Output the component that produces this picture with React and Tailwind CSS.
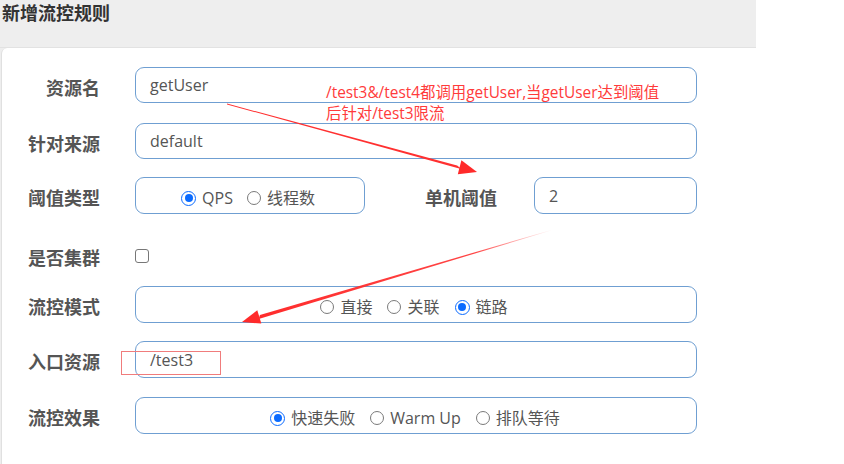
import React from "react";

const FONT = { fontFamily: '"Open Sans", "Noto Sans CJK SC", sans-serif' };

function Radio({ checked, label }) {
  return (
    <span className="flex items-center">
      {checked ? (
        <span className="flex h-[15px] w-[15px] items-center justify-center rounded-full border-[1.5px] border-[#0b6bff] bg-white">
          <span className="h-[8px] w-[8px] rounded-full bg-[#0b6bff]" />
        </span>
      ) : (
        <span className="h-[14px] w-[14px] rounded-full border border-[#7a7a7a] bg-white" />
      )}
      <span className="ml-[6px] text-[16px] text-[#555]">{label}</span>
    </span>
  );
}

function Label({ children, className = "" }) {
  return (
    <div className={`pt-[6px] text-right text-[18px] font-bold text-[#555] ${className}`}>
      {children}
    </div>
  );
}

function Box({ children, className = "" }) {
  return (
    <div
      className={`flex h-full items-center rounded-[9px] border border-[#6f9fd2] bg-white text-[16px] text-[#555] ${className}`}
    >
      {children}
    </div>
  );
}

function Row({ label, className = "", children }) {
  return (
    <div className={`flex items-center ${className}`}>
      <Label className="w-[98px]">{label}</Label>
      <div className="ml-[35px] flex h-full items-center">{children}</div>
    </div>
  );
}

export default function App() {
  return (
    <div className="relative h-[464px] w-[844px] overflow-hidden bg-white" style={FONT}>
      <div className="flex h-[464px] w-[756px] flex-col bg-[#eeeeee]">
        <div className="h-[48px] border-b border-[#e2e2e2] pl-[2px]">
          <h1 className="text-[18px] font-bold leading-[26px] text-[#333]">新增流控规则</h1>
        </div>
        <div className="ml-[1px] flex flex-1 flex-col rounded-tl-[6px] border-l border-[#e0e0e0] bg-white pt-[19px]">
          <Row label="资源名" className="h-[36px]">
            <Box className="w-[562px] pl-[14px]">getUser</Box>
          </Row>
          <Row label="针对来源" className="mt-[20px] h-[36px]">
            <Box className="w-[562px] pl-[14px]">default</Box>
          </Row>
          <Row label="阈值类型" className="mt-[18px] h-[37px]">
            <Box className="w-[230px] justify-center gap-[14px] pr-[4px] pt-[5px]">
              <Radio checked label="QPS" />
              <Radio label="线程数" />
            </Box>
            <Label className="ml-[34px] w-[98px]">单机阈值</Label>
            <div className="ml-[37px] h-full">
              <Box className="w-[163px] pl-[14px]">2</Box>
            </div>
          </Row>
          <Row label="是否集群" className="mt-[23px] h-[37px]">
            <span className="h-[14px] w-[14px] rounded-[3px] border border-[#777] bg-white" />
          </Row>
          <Row label="流控模式" className="mt-[12px] h-[37px]">
            <Box className="w-[562px] justify-center gap-[15px] pr-[4px] pt-[5px]">
              <Radio label="直接" />
              <Radio label="关联" />
              <Radio checked label="链路" />
            </Box>
          </Row>
          <Row label="入口资源" className="mt-[18px] h-[37px]">
            <Box className="w-[562px] pl-[14px]">/test3</Box>
          </Row>
          <Row label="流控效果" className="mt-[19px] h-[37px]">
            <Box className="w-[562px] justify-center gap-[15px] pr-[2px] pt-[5px]">
              <Radio checked label="快速失败" />
              <Radio label="Warm Up" />
              <Radio label="排队等待" />
            </Box>
          </Row>
        </div>
      </div>

      {/* note written over the form */}
      <div className="absolute left-[326px] top-[82px] text-[15.4px] leading-[21px] text-[#ff3b3b]">
        <div>/test3&amp;/test4都调用getUser,当getUser达到阈值</div>
        <div>后针对/test3限流</div>
      </div>

      {/* highlight frame around the entry resource value */}
      <div className="absolute left-[121px] top-[351px] h-[24px] w-[100px] border border-[#f07c7c]" />

      {/* pointer arrows */}
      <svg className="pointer-events-none absolute left-0 top-0" width="844" height="464">
        <defs>
          <linearGradient id="fade" x1="552" y1="230" x2="242" y2="322" gradientUnits="userSpaceOnUse">
            <stop offset="0" stopColor="#ff3030" stopOpacity="0" />
            <stop offset="0.25" stopColor="#ff3030" stopOpacity="0.9" />
            <stop offset="1" stopColor="#ff2a2a" />
          </linearGradient>
        </defs>
        <polygon points="227,103.6 227,104.4 461.9,169.2 457.1,165.4" fill="#ff3030" />
        <polygon points="477,172 457.8,174.3 461.4,160.3" fill="#ff2a2a" />
        <polygon points="552,229.8 552,230.2 258.7,318.9 259.9,314.9" fill="url(#fade)" />
        <polygon points="242,322 261.3,323.6 257.3,310.2" fill="#ff2a2a" />
      </svg>
    </div>
  );
}
